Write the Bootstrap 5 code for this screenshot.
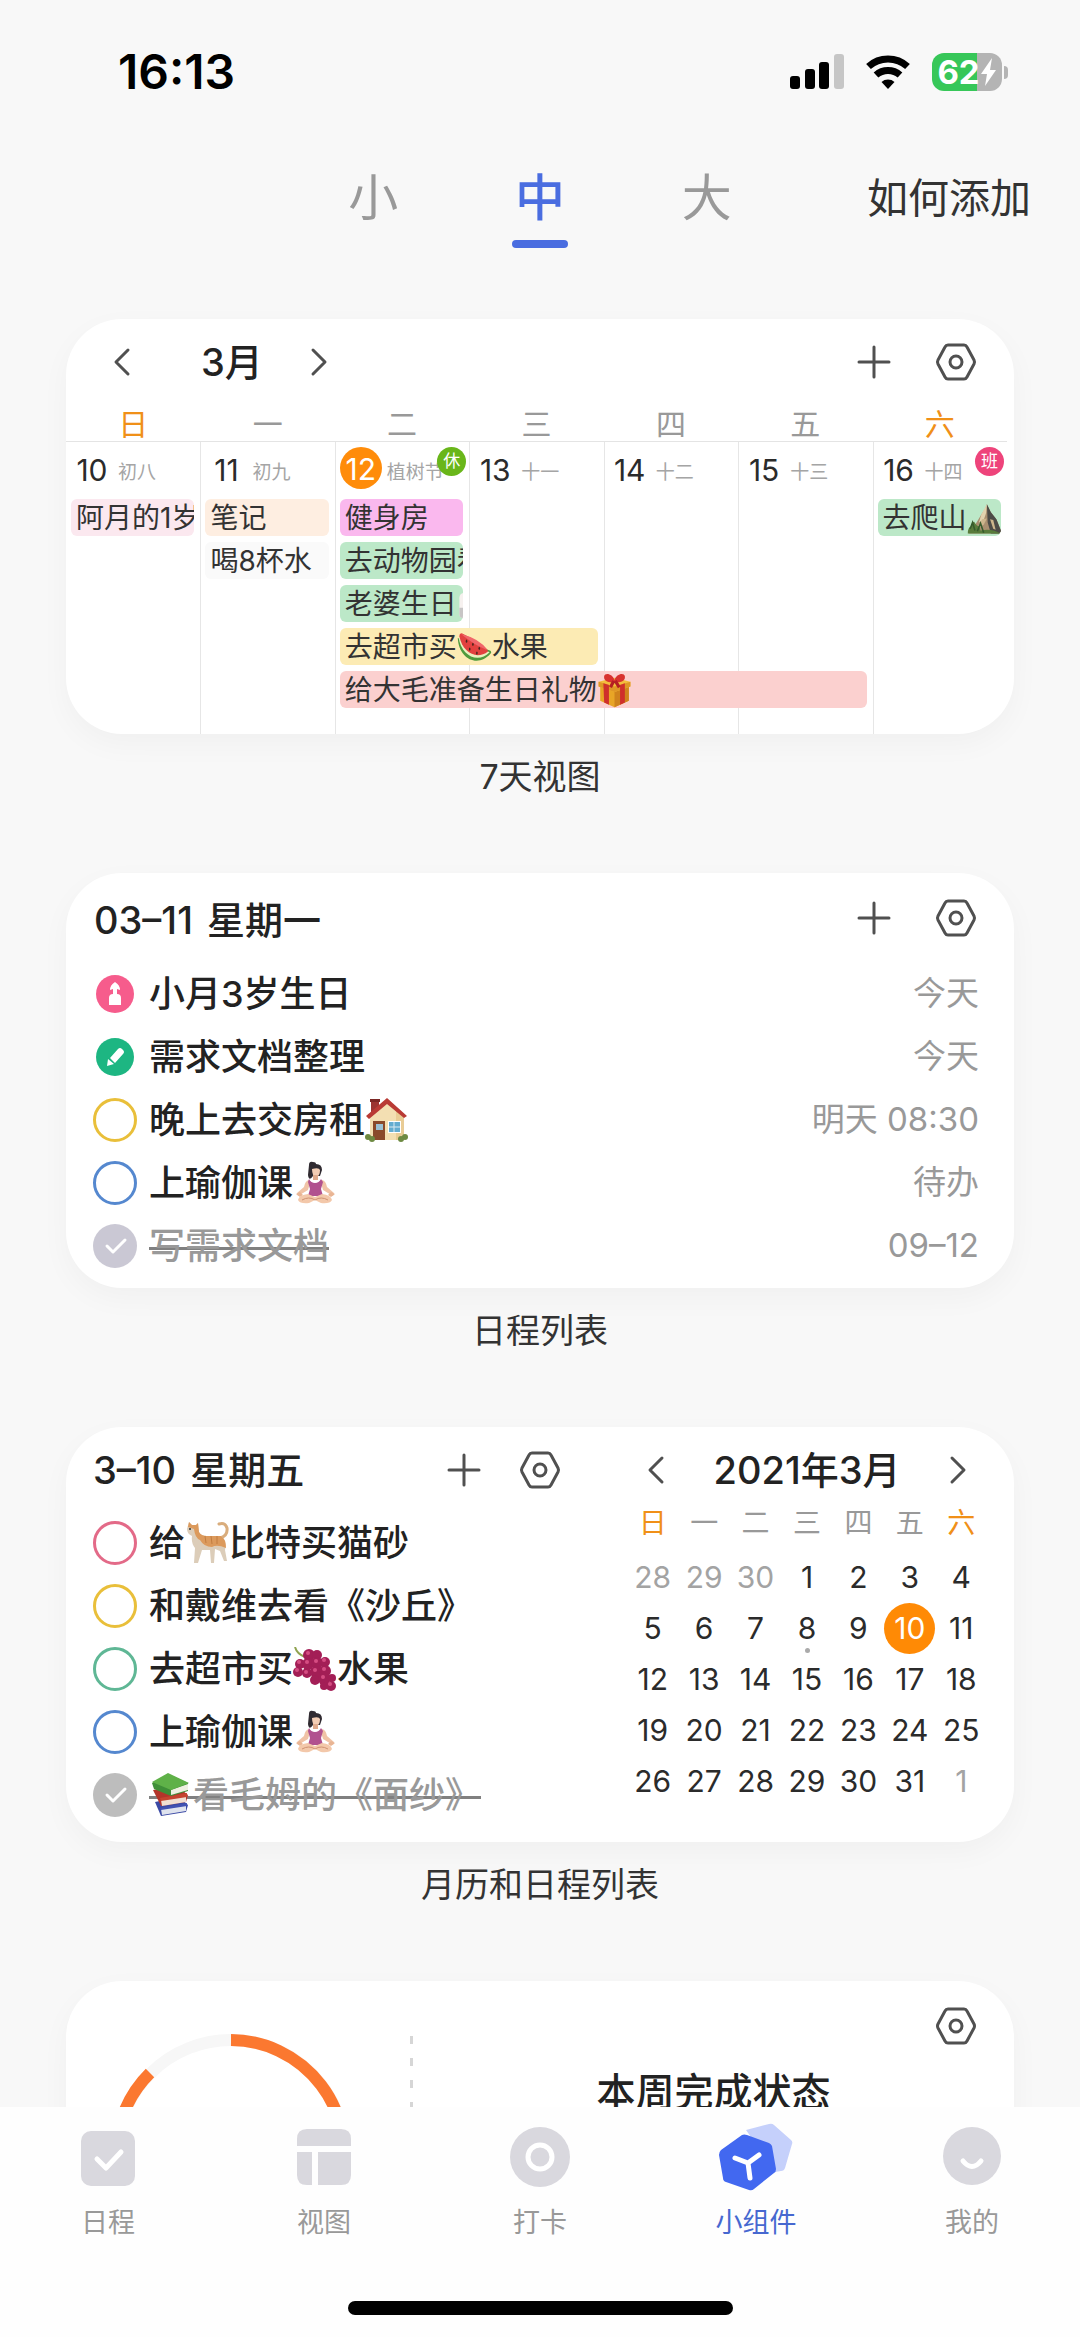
<!DOCTYPE html>
<html lang="zh-CN">
<head>
<meta charset="utf-8">
<meta name="viewport" content="width=device-width, initial-scale=1">
<title>小组件</title>
<link href="https://cdn.jsdelivr.net/npm/bootstrap@5.3.0/dist/css/bootstrap.min.css" rel="stylesheet">
<style>
  body { font-family: Inter, "Noto Sans CJK SC", sans-serif; background: #f8f8f8; color: #2b2b2b; }
  a { text-decoration: none; }
  .screen { height: 100vh; }
  .scroller { overflow-y: auto; scrollbar-width: none; min-height: 0; }
  .scroller::-webkit-scrollbar { display: none; }

  /* status bar */
  .status { height: 144px; padding: 0 72px 0 118px; color: #000; }
  .clock { font-size: 48px; font-weight: 600; line-height: 48px; }
  .signals { gap: 18px; }
  .battery { width: 70px; height: 38px; border-radius: 12px; color: #fff; font-size: 33px; font-weight: 700; line-height: 38px;
    background: linear-gradient(to right, #37c759 64%, #b4b4b4 64%); }
  .nub { width: 4px; height: 13px; border-radius: 0 4px 4px 0; background: #b4b4b4; margin-left: 2px; }

  /* size tabs */
  .sizebar { display: grid; grid-template-columns: 1fr 500px 1fr; padding: 22px 49px 71px; }
  .size-tab { flex: 1; display: flex; flex-direction: column; align-items: center; color: #999; font-size: 50px; line-height: 64px; }
  .size-tab::after { content: ""; width: 56px; height: 8px; margin-top: 10px; border-radius: 4px; }
  .size-tab.active { color: #4a6de0; font-weight: 500; }
  .size-tab.active::after { background: #4a6de0; }
  .howto { color: #333; font-size: 41px; line-height: 64px; }

  /* widgets */
  .widgets { padding: 0 66px; }
  .widget { border-radius: 56px; background: #fff; min-height: 415px; overflow: hidden; box-shadow: 0 10px 30px rgba(0,0,0,.035); }
  .caption { font-size: 34px; line-height: 86px; margin-bottom: 53px; text-align: center; color: #333; }
  .head { height: 89px; }
  .w-title { font-size: 38px; font-weight: 500; line-height: 44px; margin: 0; color: #222; }
  .ico-btn { width: 44px; height: 44px; padding: 0; border: 0; background: none; display: flex; color: #505050; }
  .ico-btn svg { width: 44px; height: 44px; fill: none; stroke: currentColor; stroke-width: 3; stroke-linecap: round; stroke-linejoin: round; }
  .tools { gap: 38px; padding-right: 36px; }

  /* week view */
  .week-head { padding-left: 34px; height: 85px; }
  .month { margin: 0 34px 0 57px; }
  .week { display: grid; grid-template-columns: repeat(7, 1fr); margin-right: 7px; }
  .dow { font-size: 30px; line-height: 33px; padding-top: 4px; text-align: center; color: #999; }
  .weekend { color: #f09018; }
  .days { display: grid; grid-template-columns: repeat(7, 1fr); grid-template-rows: 57px repeat(5, 43px) 20px; margin-right: 7px; border-top: 1px solid #e4e4e4; }
  .day { grid-row: 1 / 8; border-left: 1px solid #e6e6e6; padding: 5px 0 0 4px; position: relative; }
  .day:first-child { border-left: 0; padding-left: 5px; }
  .num { width: 42px; height: 42px; border-radius: 50%; font-size: 30px; line-height: 46px; text-align: center; }
  .num.today { background: #ff8c0a; color: #fff; line-height: 44px; }
  .lunar { margin-left: 5px; font-size: 19px; line-height: 44px; color: #a5a5a5; height: 40px; padding-top: 4px; white-space: nowrap; }
  .tagdot { position: absolute; top: 5px; right: 3px; width: 29px; height: 29px; border-radius: 50%; color: #fff; font-size: 17px; line-height: 28px; text-align: center; }
  .rest { background: #69b61a; }
  .work { background: #ee447b; }
  .ev { z-index: 1; height: 37px; margin: 0 6px 0 5px; padding-left: 5px; border-radius: 6px; overflow: hidden; white-space: nowrap; font-size: 28px; line-height: 37px; display: flex; align-items: center; padding-top: 2px; color: #333; }
  .ev svg { width: 35px; height: 35px; flex: none; }
  .c1 { grid-column: 1; } .c2 { grid-column: 2; } .c3 { grid-column: 3; } .c4 { grid-column: 4; } .c5 { grid-column: 5; } .c6 { grid-column: 6; } .c7 { grid-column: 7; }
  .span2 { grid-column: 3 / span 2; } .span4 { grid-column: 3 / span 4; }
  .r1 { grid-row: 2; } .r2 { grid-row: 3; } .r3 { grid-row: 4; } .r4 { grid-row: 5; } .r5 { grid-row: 6; }
  .ev-rose { background: #fbe8ef; } .ev-peach { background: #feeee1; } .ev-plain { background: #fafafa; }
  .ev-pink { background: #fab8ee; } .ev-green { background: #bce8c8; } .ev-yellow { background: #fcebb4; } .ev-red { background: #fbd0cf; }

  /* task lists */
  .task { height: 63px; font-size: 36px; font-weight: 500; color: #222; }
  .task-text { margin-left: 12px; line-height: 44px; display: flex; align-items: center; }
  .task svg.emo { width: 44px; height: 44px; flex: none; }
  .task time { margin-left: auto; font-size: 33px; font-weight: 400; color: #999; }
  .kind { width: 44px; height: 44px; flex: none; }
  .ring.form-check-input { width: 44px; height: 44px; margin: 0; flex: none; border: 3px solid; border-radius: 50%; background-color: #fff; }
  .ring.ring-gold { border-color: #e9bf3a; } .ring.ring-blue { border-color: #5588cf; } .ring.ring-red { border-color: #e36a88; } .ring.ring-green { border-color: #5fb795; }
  .ring.form-check-input:checked { border: 0; background: #cac8d4 url("data:image/svg+xml,%3Csvg xmlns='http://www.w3.org/2000/svg' viewBox='0 0 44 44'%3E%3Cpath d='M14 22l6 6 12-12' fill='none' stroke='%23fff' stroke-width='3' stroke-linecap='round' stroke-linejoin='round'/%3E%3C/svg%3E") center / 44px 44px; }
  .ring.ring-gray.form-check-input:checked { background-color: #bdbdbd; }
  .done .task-text { color: #999; background: linear-gradient(#808080, #808080) 0 23px / 100% 3px no-repeat; }
  .list-wide { padding: 0 35px 0 27px; }
  .wide-title { padding: 5px 0 0 28px; }

  /* month view */
  .duo { padding: 4px 27px 0; }
  .duo .head { height: 78px; }
  .duo-list { margin-right: 65px; }
  .duo-list .head { margin-bottom: 2px; }
  .duo-cal { width: 360px; flex: none; }
  .duo-cal .head { padding: 0 7px; }
  .cal { width: 100%; table-layout: fixed; text-align: center; font-size: 30px; }
  .cal th { height: 43px; vertical-align: top; font-size: 28px; font-weight: 400; line-height: 28px; color: #999; padding: 0; }
  .cal th.weekend { color: #f09018; }
  .cal td { height: 51px; padding: 0; line-height: 51px; position: relative; }
  .cal .out { color: #a3a3a3; }
  .cal .today-pin { display: block; width: 51px; height: 51px; margin: 0 auto; border-radius: 50%; background: #ff8a05; color: #fff; }
  .cal .dot::after { content: ""; position: absolute; left: 50%; bottom: 1px; width: 5px; height: 5px; margin-left: -2px; border-radius: 50%; background: #aaa; }

  /* week statistics */
  .gauge { width: 240px; height: 240px; margin: 53px 59px 0 45px; flex: none; }
  .rule { width: 3px; margin-top: 55px; flex: none; background: repeating-linear-gradient(#d6d6d6 0 8px, transparent 8px 22px); }
  .stat-title { font-size: 39px; }

  /* bottom navigation */
  .tabbar { background: #fefefe; height: 230px; padding-top: 15px; flex: none; z-index: 2; }
  .tabbar a { flex: 1; color: #999; font-size: 27px; line-height: 40px; }
  .tabbar a.active { color: #4668d0; }
  .tabbar svg { height: 70px; width: 76px; display: block; margin: 0 auto 11px; }
  .homebar { width: 385px; height: 14px; border-radius: 7px; background: #000; margin: 58px auto 0; }
</style>
</head>
<body>
<svg class="d-none" aria-hidden="true">
  <symbol id="i-left" viewBox="0 0 44 44"><path d="M28 10L16 22l12 12"/></symbol>
  <symbol id="i-right" viewBox="0 0 44 44"><path d="M16 10l12 12-12 12"/></symbol>
  <symbol id="i-plus" viewBox="0 0 44 44"><path d="M22 7v30M7 22h30"/></symbol>
  <symbol id="i-nut" viewBox="0 0 44 44"><path d="M14 5h16q2 0 3 2l7 13q1 2 0 4l-7 13q-1 2-3 2H14q-2 0-3-2L4 24q-1-2 0-4l7-13q1-2 3-2z"/><circle cx="22" cy="22" r="6"/></symbol>

  <symbol id="e-melon" viewBox="0 0 44 44"><path d="M1 10C2 36 26 48 42 30q2-2 0-4z" fill="#4f9a3d"/><path d="M2 9C5 32 26 43 41 28z" fill="#e9f0c0"/><path d="M3 8C7 29 25 38 39 27Q38 20 6 4 3 4 3 8z" fill="#e2413f"/><path d="M5 5q24 6 33 20-15-5-33-20z" fill="#f0666a"/><g fill="#46251d"><ellipse cx="12" cy="14" rx="1" ry="2"/><ellipse cx="20" cy="18" rx="1" ry="2"/><ellipse cx="28" cy="23" rx="1" ry="2"/><ellipse cx="16" cy="24" rx="1" ry="2"/><ellipse cx="25" cy="29" rx="1" ry="2"/></g></symbol>
  <symbol id="e-gift" viewBox="0 0 44 44"><path d="M4 16l18 7 18-7v19l-18 8-18-8z" fill="#e8a526"/><path d="M22 23l18-7v19l-18 8z" fill="#cf831c"/><path d="M2 11l20-5 20 5v6l-20 7-20-7z" fill="#f3bc3d"/><path d="M2 11l20 6 20-6v6l-20 7-20-7z" fill="#df9626"/><path d="M8 13l7 2v25l-6-3zM29 15l6-2v24l-6 3z" fill="#cf2f2b"/><path d="M22 12C14 12 8 10 9 4c1-5 11-3 13 5C24 1 34-1 35 4c1 6-5 8-13 8z" fill="#d8322f"/><path d="M21 10l-4 8M23 10l5 8" stroke="#b41f22" stroke-width="4"/></symbol>
  <symbol id="e-mountain" viewBox="0 0 44 44"><path d="M2 41L12 27l6-10 4-6 3-7 5 10 7 9 6 15-2 3z" fill="#a98f70"/><path d="M25 4l5 10 7 9 6 15-3 3H30l-4-14z" fill="#4c4b47"/><path d="M25 4l-7 13-3 10 6-3 3-9z" fill="#e2d2ae"/><path d="M19 23l-7 12 9-5 4-8zM29 23l4 12 3 1-3-12z" fill="#cdb58c"/><path d="M1 41q0-8 4-9 1-6 4-6 2 4 4 5 3 0 4 6l8-1q10 0 17 5z" fill="#587c3b"/><path d="M4 35l3-8 3 10M13 38l4-10 4 12" stroke="#365b2c" stroke-width="2" fill="none"/></symbol>
  <symbol id="e-house" viewBox="0 0 44 44"><path d="M6 2h8v12H6z" fill="#9c3431"/><path d="M5 1h10v3H5z" fill="#7b2724"/><path d="M5 18L22 4l17 14v24H5z" fill="#f3dfb2"/><path d="M31 12l8 6v24h-8z" fill="#e9cc95"/><path d="M1 18L22 0l20 18-3 2L22 6 4 21z" fill="#b93a34"/><path d="M8 23h12v19H8z" fill="#8a4a2b"/><path d="M11 26h7v6h-7z" fill="#9bc1d4"/><path d="M23 23h13v12H23z" fill="#fff"/><path d="M24 24h11v10H24z" fill="#64acd0"/><path d="M29 24v10M24 29h11" stroke="#dceaf0"/><g fill="#6d8a42"><circle cx="3" cy="39" r="3"/><circle cx="7" cy="41" r="3"/><circle cx="40" cy="39" r="3"/><circle cx="36" cy="41" r="3"/></g></symbol>
  <symbol id="e-yoga" viewBox="0 0 44 44"><path d="M16 4q0-4 4-3 3 0 3 2 6 0 6 6l-2 6h-7q-4 6-5-1z" fill="#302b31"/><path d="M19 8q7-2 8 1 0 6-4 7-4-1-4-8z" fill="#f3cdb4"/><path d="M20 14h5v5h-5z" fill="#e0ab8d"/><path d="M16 19q-4 1-5 7L4 32l1 3 10-6 2-7zM29 19q4 1 5 7l7 6-1 3-10-6-2-7z" fill="#f0c3a6"/><path d="M16 18q2 4 6 4t6-4l2 3-2 7 2 7H15l2-7-2-7z" fill="#b1518f"/><path d="M3 33l4-2 3 3-3 2zM42 33l-4-2-3 3 3 2z" fill="#e9b594"/><path d="M15 33q-9 1-10 6 2 4 11 3l6-3 6 3q9 1 11-3-1-5-10-6l-7 3z" fill="#f3c8aa"/><path d="M9 39q7-4 13 0 6-4 13 0" stroke="#cf9273" fill="none"/></symbol>
  <symbol id="e-cat" viewBox="0 0 44 44"><path d="M35 17q8-2 7-10-2-6-8-4" fill="none" stroke="#d9ad7d" stroke-width="3" stroke-linecap="round"/><path d="M2 8l2-7 3 3h4l2-2 1 9q2 4 8 4h14q6 4 4 14l2 11h-3l-4-10-5-2-1 14h-3l-1-13H17l-4 13h-4l1-15q-4-5-3-12-5-2-5-7z" fill="#dccdb9"/><path d="M3 6l1-5 3 3h4l2-2 1 9q2 4 8 4h14q5 3 5 12-9-4-14-1-8 0-12-7Q10 17 9 8z" fill="#dc9a5c"/><path d="M20 15l1 7M26 15l1 8M32 15v8" stroke="#c27d40"/><circle cx="5" cy="8" r="1" fill="#333"/></symbol>
  <symbol id="e-grapes" viewBox="0 0 44 44"><path d="M2 0q2 7 10 10M12 10q-1-4 4-6" stroke="#8fa350" stroke-width="2" fill="none"/><g fill="#a31e56"><circle cx="16" cy="8" r="6"/><circle cx="24" cy="8" r="5"/><circle cx="7" cy="17" r="5"/><circle cx="15" cy="17" r="6"/><circle cx="24" cy="16" r="6"/><circle cx="32" cy="15" r="5"/><circle cx="5" cy="25" r="5"/><circle cx="14" cy="26" r="5"/><circle cx="23" cy="25" r="6"/><circle cx="32" cy="24" r="6"/><circle cx="22" cy="33" r="5"/><circle cx="31" cy="32" r="6"/><circle cx="39" cy="31" r="4"/><circle cx="31" cy="39" r="4"/><circle cx="38" cy="39" r="5"/></g><g fill="#d54d82"><circle cx="15" cy="6" r="2"/><circle cx="6" cy="15" r="2"/><circle cx="14" cy="15" r="2"/><circle cx="23" cy="14" r="2"/><circle cx="31" cy="13" r="2"/><circle cx="22" cy="23" r="2"/><circle cx="31" cy="22" r="2"/><circle cx="4" cy="23" r="2"/><circle cx="30" cy="30" r="2"/><circle cx="37" cy="37" r="2"/><circle cx="13" cy="25" r="2"/></g></symbol>
  <symbol id="e-books" viewBox="0 0 44 44"><path d="M6 29l24-5 9 8-2 7-25 4z" fill="#3b4aa5"/><path d="M12 36l25-4v6l-24 4z" fill="#dfe3ee"/><path d="M11 35l27-5v3l-26 4z" fill="#4152b2"/><path d="M4 17l24-4 11 9-2 7-25 4z" fill="#b3352a"/><path d="M12 27l25-4v6l-24 4z" fill="#f0dfd2"/><path d="M11 25l27-5v4l-26 4z" fill="#c5442f"/><path d="M3 10L19 1l20 9v8l-17 5L5 16z" fill="#3f8f38"/><path d="M22 17l17-6v6l-17 5z" fill="#eef0e0"/><path d="M3 9L19 0l21 10-18 7z" fill="#5fb148"/></symbol>
  <symbol id="e-cake" viewBox="0 0 44 44"><path d="M3 14q0-7 8-7h22q8 0 8 7v20q0 6-8 6H11q-8 0-8-6z" fill="#f6f1ef"/><path d="M3 26h38v8q0 6-8 6H11q-8 0-8-6z" fill="#c7c5c5"/></symbol>
</svg>

<div class="screen d-flex flex-column overflow-hidden">
  <header class="status d-flex align-items-center justify-content-between flex-shrink-0">
    <span class="clock">16:13</span>
    <div class="signals d-flex align-items-center">
      <svg width="54" height="36" viewBox="0 0 54 36" role="img" aria-label="信号"><rect x="0" y="22" width="10" height="13" rx="3"/><rect x="15" y="15" width="10" height="20" rx="3"/><rect x="29" y="8" width="10" height="27" rx="3"/><rect x="44" y="0" width="10" height="35" rx="3" fill="#c6c6c6"/></svg>
      <svg width="52" height="36" viewBox="-3 0 52 36" role="img" aria-label="无线网络"><path d="M23 35l-6.500-7a10 10 0 0 1 13 0z"/><path d="M11 21a18 18 0 0 1 24 0M3.500 12.500a29 29 0 0 1 39 0" fill="none" stroke="#000" stroke-width="7"/></svg>
      <div class="d-flex align-items-center">
        <div class="battery d-flex align-items-center justify-content-center"><span>62</span><svg width="17" height="28" viewBox="0 0 17 28"><path d="M12 0L1 16h6L5 28l11-16h-6z" fill="#fff"/></svg></div>
        <div class="nub"></div>
      </div>
    </div>
  </header>

  <main class="scroller flex-grow-1">
    <nav class="sizebar">
      <div></div>
      <div class="d-flex">
        <a class="size-tab" href="#">小</a>
        <a class="size-tab active" href="#" aria-current="page">中</a>
        <a class="size-tab" href="#">大</a>
      </div>
      <a class="howto text-end text-nowrap" href="#">如何添加</a>
    </nav>

    <div class="widgets">
      <figure class="m-0">
        <section class="widget">
          <div class="week-head d-flex align-items-center justify-content-between">
            <div class="d-flex align-items-center">
              <button class="ico-btn" aria-label="上个月"><svg><use href="#i-left"/></svg></button>
              <h2 class="w-title month">3月</h2>
              <button class="ico-btn" aria-label="下个月"><svg><use href="#i-right"/></svg></button>
            </div>
            <div class="tools d-flex">
              <button class="ico-btn" aria-label="添加"><svg><use href="#i-plus"/></svg></button>
              <button class="ico-btn" aria-label="设置"><svg><use href="#i-nut"/></svg></button>
            </div>
          </div>
          <div class="week">
            <div class="dow weekend">日</div><div class="dow">一</div><div class="dow">二</div><div class="dow">三</div><div class="dow">四</div><div class="dow">五</div><div class="dow weekend">六</div>
          </div>
          <div class="days">
            <div class="day c1 d-flex"><span class="num">10</span><span class="lunar">初八</span></div>
            <div class="day c2 d-flex"><span class="num">11</span><span class="lunar">初九</span></div>
            <div class="day c3 d-flex"><span class="num today">12</span><span class="lunar">植树节</span><span class="tagdot rest">休</span></div>
            <div class="day c4 d-flex"><span class="num">13</span><span class="lunar">十一</span></div>
            <div class="day c5 d-flex"><span class="num">14</span><span class="lunar">十二</span></div>
            <div class="day c6 d-flex"><span class="num">15</span><span class="lunar">十三</span></div>
            <div class="day c7 d-flex"><span class="num">16</span><span class="lunar">十四</span><span class="tagdot work">班</span></div>
            <div class="ev ev-rose c1 r1">阿月的1岁</div>
            <div class="ev ev-peach c2 r1">笔记</div>
            <div class="ev ev-plain c2 r2">喝8杯水</div>
            <div class="ev ev-pink c3 r1">健身房</div>
            <div class="ev ev-green c3 r2">去动物园看</div>
            <div class="ev ev-green c3 r3">老婆生日<svg><use href="#e-cake"/></svg></div>
            <div class="ev ev-yellow span2 r4">去超市买<svg><use href="#e-melon"/></svg>水果</div>
            <div class="ev ev-red span4 r5">给大毛准备生日礼物<svg><use href="#e-gift"/></svg></div>
            <div class="ev ev-green c7 r1">去爬山<svg><use href="#e-mountain"/></svg></div>
          </div>
        </section>
        <figcaption class="caption">7天视图</figcaption>
      </figure>

      <figure class="m-0">
        <section class="widget">
          <div class="head d-flex align-items-center justify-content-between">
            <h2 class="w-title wide-title"><span class="me-1">03–11</span> 星期一</h2>
            <div class="tools d-flex">
              <button class="ico-btn" aria-label="添加"><svg><use href="#i-plus"/></svg></button>
              <button class="ico-btn" aria-label="设置"><svg><use href="#i-nut"/></svg></button>
            </div>
          </div>
          <ul class="list-unstyled m-0 list-wide">
            <li class="task d-flex align-items-center"><svg class="kind" viewBox="0 0 44 44"><circle cx="22" cy="22" r="19" fill="#f65c8c"/><path d="M22 10q5 3 5 8l-3-1v5h-4v-5l-3 1q0-5 5-8zM16 26q0-4 4-4h4q4 0 4 4v7H16z" fill="#fff"/></svg><span class="task-text">小月3岁生日</span><time>今天</time></li>
            <li class="task d-flex align-items-center"><svg class="kind" viewBox="0 0 44 44"><circle cx="22" cy="22" r="19" fill="#1db682"/><path d="M17 23l8-9q2-2 4 0l1 1q2 2 0 4l-8 9zM15 24l6 5-7 2z" fill="#fff"/></svg><span class="task-text">需求文档整理</span><time>今天</time></li>
            <li class="task d-flex align-items-center"><input class="form-check-input ring ring-gold" type="checkbox" id="a3"><label class="task-text" for="a3">晚上去交房租<svg class="emo"><use href="#e-house"/></svg></label><time>明天 08:30</time></li>
            <li class="task d-flex align-items-center"><input class="form-check-input ring ring-blue" type="checkbox" id="a4"><label class="task-text" for="a4">上瑜伽课<svg class="emo"><use href="#e-yoga"/></svg></label><time>待办</time></li>
            <li class="task done d-flex align-items-center"><input class="form-check-input ring" type="checkbox" id="a5" checked><label class="task-text" for="a5">写需求文档</label><time>09–12</time></li>
          </ul>
        </section>
        <figcaption class="caption">日程列表</figcaption>
      </figure>

      <figure class="m-0">
        <section class="widget duo d-flex">
          <div class="duo-list flex-grow-1">
            <div class="head d-flex align-items-center justify-content-between">
              <h2 class="w-title"><span class="me-1">3–10</span> 星期五</h2>
              <div class="d-flex gap-4">
                <button class="ico-btn me-2" aria-label="添加"><svg><use href="#i-plus"/></svg></button>
                <button class="ico-btn" aria-label="设置"><svg><use href="#i-nut"/></svg></button>
              </div>
            </div>
            <ul class="list-unstyled m-0">
              <li class="task d-flex align-items-center"><input class="form-check-input ring ring-red" type="checkbox" id="b1"><label class="task-text" for="b1">给<svg class="emo"><use href="#e-cat"/></svg>比特买猫砂</label></li>
              <li class="task d-flex align-items-center"><input class="form-check-input ring ring-gold" type="checkbox" id="b2"><label class="task-text" for="b2">和戴维去看《沙丘》</label></li>
              <li class="task d-flex align-items-center"><input class="form-check-input ring ring-green" type="checkbox" id="b3"><label class="task-text" for="b3">去超市买<svg class="emo"><use href="#e-grapes"/></svg>水果</label></li>
              <li class="task d-flex align-items-center"><input class="form-check-input ring ring-blue" type="checkbox" id="b4"><label class="task-text" for="b4">上瑜伽课<svg class="emo"><use href="#e-yoga"/></svg></label></li>
              <li class="task done d-flex align-items-center"><input class="form-check-input ring ring-gray" type="checkbox" id="b5" checked><label class="task-text" for="b5"><svg class="emo"><use href="#e-books"/></svg>看毛姆的《面纱》</label></li>
            </ul>
          </div>
          <div class="duo-cal">
            <div class="head d-flex align-items-center justify-content-between">
              <button class="ico-btn" aria-label="上个月"><svg><use href="#i-left"/></svg></button>
              <h2 class="w-title">2021年3月</h2>
              <button class="ico-btn" aria-label="下个月"><svg><use href="#i-right"/></svg></button>
            </div>
            <table class="cal">
              <thead><tr><th class="weekend">日</th><th>一</th><th>二</th><th>三</th><th>四</th><th>五</th><th class="weekend">六</th></tr></thead>
              <tbody>
                <tr><td class="out">28</td><td class="out">29</td><td class="out">30</td><td>1</td><td>2</td><td>3</td><td>4</td></tr>
                <tr><td>5</td><td>6</td><td>7</td><td class="dot">8</td><td>9</td><td><span class="today-pin">10</span></td><td>11</td></tr>
                <tr><td>12</td><td>13</td><td>14</td><td>15</td><td>16</td><td>17</td><td>18</td></tr>
                <tr><td>19</td><td>20</td><td>21</td><td>22</td><td>23</td><td>24</td><td>25</td></tr>
                <tr><td>26</td><td>27</td><td>28</td><td>29</td><td>30</td><td>31</td><td class="out">1</td></tr>
              </tbody>
            </table>
          </div>
        </section>
        <figcaption class="caption">月历和日程列表</figcaption>
      </figure>

      <section class="widget d-flex">
        <svg class="gauge" viewBox="0 0 240 240" fill="none" stroke-width="12"><circle cx="120" cy="120" r="114" stroke="#f7f7f7"/><path d="M120 6A114 114 0 1 1 39 39" stroke="#fb7830"/></svg>
        <div class="rule"></div>
        <div class="flex-grow-1">
          <div class="head d-flex align-items-center justify-content-end tools">
            <button class="ico-btn" aria-label="设置"><svg><use href="#i-nut"/></svg></button>
          </div>
          <h2 class="w-title stat-title text-center">本周完成状态</h2>
        </div>
      </section>
    </div>
  </main>

  <footer class="tabbar">
    <nav class="d-flex text-center">
      <a href="#"><svg viewBox="0 0 76 70"><rect x="11" y="9" width="54" height="55" rx="10" fill="#d9d8de"/><path d="M27 37l9 9 15-16" fill="none" stroke="#fff" stroke-width="5" stroke-linecap="round" stroke-linejoin="round"/></svg>日程</a>
      <a href="#"><svg viewBox="0 0 76 70" fill="#d9d8de"><path d="M11 24v-7q0-10 10-10h34q10 0 10 10v7zM11 30h15v33h-5q-10 0-10-10zM32 30h33v23q0 10-10 10H32z"/></svg>视图</a>
      <a href="#"><svg viewBox="0 0 76 70"><circle cx="38" cy="35" r="30" fill="#d9d8de"/><circle cx="38" cy="35" r="12" fill="none" stroke="#fff" stroke-width="5"/></svg>打卡</a>
      <a href="#" class="active" aria-current="page"><svg viewBox="0 0 76 70"><path d="M28 8l23-6q3-1 5 1l17 15q2 2 1 4l-7 24q-1 3-4 3l-6 1z" fill="#c5d0fb"/><path d="M24 13q2-1 5 0l22 8q2 1 3 3l4 23q0 3-2 4L36 67q-2 2-5 1L8 60q-3-1-3-4L1 33q0-3 2-5z" fill="#4268f0"/><path d="M17 36l13 5 11-8M30 41l2 15" fill="none" stroke="#fff" stroke-width="5" stroke-linecap="round" stroke-linejoin="round"/></svg>小组件</a>
      <a href="#"><svg viewBox="0 0 76 70"><circle cx="38" cy="34" r="29" fill="#d9d8de"/><path d="M29 39q9 11 18 0" fill="none" stroke="#fff" stroke-width="5" stroke-linecap="round"/></svg>我的</a>
    </nav>
    <div class="homebar"></div>
  </footer>
</div>
<script src="https://cdn.jsdelivr.net/npm/bootstrap@5.3.0/dist/js/bootstrap.bundle.min.js"></script>
</body>
</html>
